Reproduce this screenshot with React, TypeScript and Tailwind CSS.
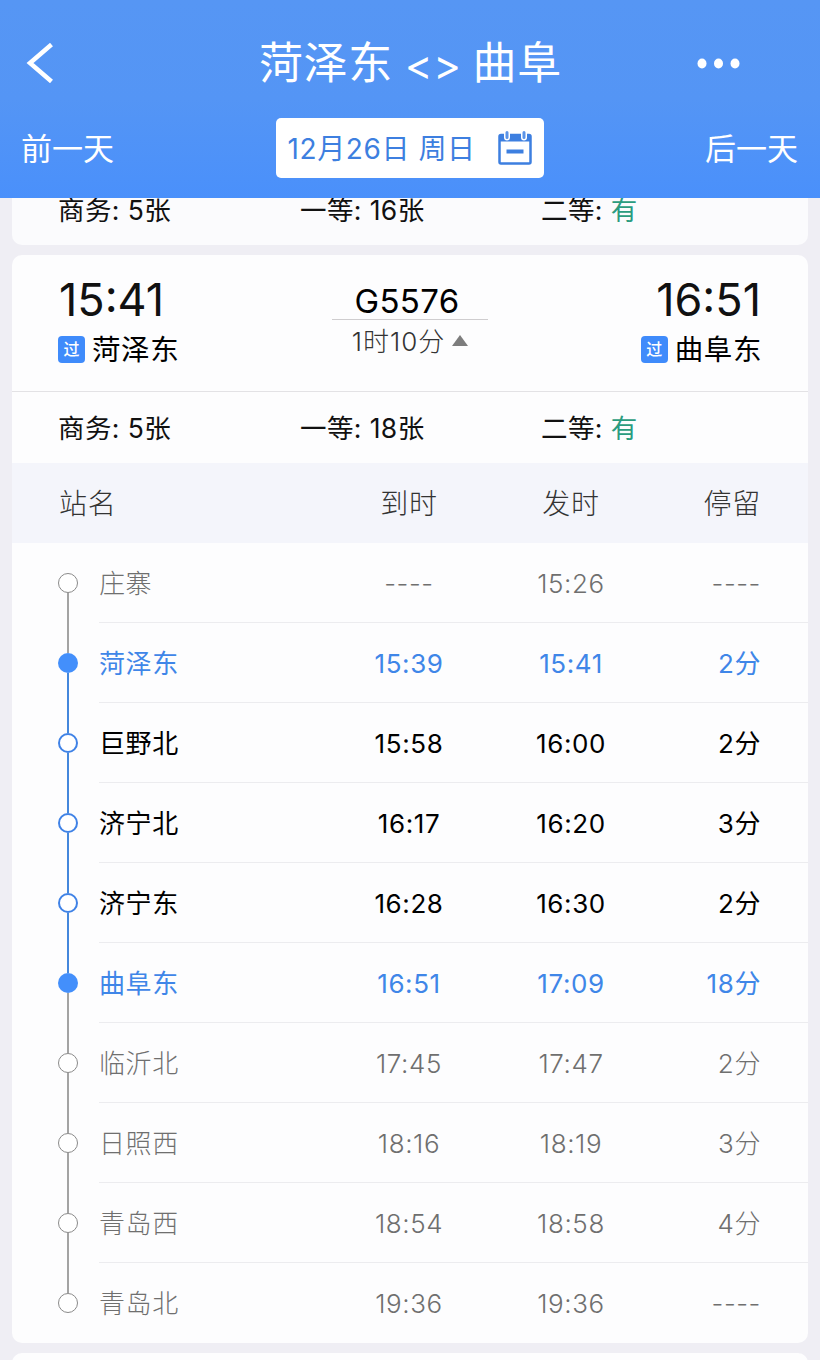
const stops = [
  { name: "庄寨", arrive: "----", depart: "15:26", stay: "----", kind: "off" },
  { name: "菏泽东", arrive: "15:39", depart: "15:41", stay: "2分", kind: "end" },
  { name: "巨野北", arrive: "15:58", depart: "16:00", stay: "2分", kind: "on" },
  { name: "济宁北", arrive: "16:17", depart: "16:20", stay: "3分", kind: "on" },
  { name: "济宁东", arrive: "16:28", depart: "16:30", stay: "2分", kind: "on" },
  { name: "曲阜东", arrive: "16:51", depart: "17:09", stay: "18分", kind: "end" },
  { name: "临沂北", arrive: "17:45", depart: "17:47", stay: "2分", kind: "off" },
  { name: "日照西", arrive: "18:16", depart: "18:19", stay: "3分", kind: "off" },
  { name: "青岛西", arrive: "18:54", depart: "18:58", stay: "4分", kind: "off" },
  { name: "青岛北", arrive: "19:36", depart: "19:36", stay: "----", kind: "off" },
];

const textStyle: any = {
  off: "text-[#6f6f6f] font-light",
  end: "text-[#3f86e8] font-[390]",
  on: "text-black",
};

const dotStyle: any = {
  off: "border-[1.5px] border-[#8a8a8a] bg-white",
  end: "bg-[#438ffb]",
  on: "border-2 border-[#3f82e6] bg-white",
};

// the blue part of the line runs between the two "end" stations
const first = stops.findIndex((s) => s.kind === "end");
const last = stops.length - 1 - [...stops].reverse().findIndex((s) => s.kind === "end");

function Line({ from }: { from: number }) {
  if (from < 0 || from >= stops.length - 1) return <div className="flex-1" />;
  return from >= first && from < last ? (
    <div className="flex-1 w-[2.5px] bg-[#4487dc]" />
  ) : (
    <div className="flex-1 w-[2px] bg-[#a3a3a3]" />
  );
}

function Seats({ first }: { first: string }) {
  return (
    <div className="h-[71px] pl-[46px] pt-0.5 flex items-center text-[26.5px] tracking-[0.4px] font-[390] text-[#111] whitespace-nowrap">
      <span className="w-[242px]">商务: 5张</span>
      <span className="w-[241px]">一等: {first}张</span>
      <span>
        二等: <span className="text-[#2b9c80]">有</span>
      </span>
    </div>
  );
}

function Badge() {
  return (
    <span className="w-[27px] h-[27px] mb-0.5 rounded-[4px] bg-[#3f8bfb] text-white text-[16px] font-medium tracking-normal flex items-center justify-center leading-none">
      过
    </span>
  );
}

export default function App() {
  return (
    <div className="w-[820px] h-[1360px] overflow-hidden bg-[#efeef4] font-['Inter','Noto_Sans_CJK_SC',sans-serif] leading-none">

      {/* Header */}
      <header className="relative z-10 h-[198px] bg-gradient-to-b from-[#5696f4] via-[#5495f5] to-[#4a90fb] text-white">
        <div className="h-[118px] pt-2 pl-[26px] pr-[80px] grid grid-cols-[233px_1fr_43px] items-center">
          <svg width="28" height="40" viewBox="0 0 28 40" fill="none" stroke="white" strokeWidth="4.500">
            <path d="M25.500 1.500L4 20L25.500 38.500" />
          </svg>
          <h1 className="text-[44px] tracking-[0.6px] font-[390] whitespace-nowrap flex items-center">
            <span>菏泽东</span>
            <span className="ml-[12px] mr-[11px] pt-[3px] text-[42px]">&lt;&gt;</span>
            <span>曲阜</span>
          </h1>
          <svg width="43" height="11" viewBox="0 0 43 11" fill="white">
            <ellipse cx="5" cy="5.500" rx="4.500" ry="5" />
            <ellipse cx="21.500" cy="5.500" rx="4.500" ry="5" />
            <ellipse cx="38" cy="5.500" rx="4.500" ry="5" />
          </svg>
        </div>
        <div className="h-[60px] px-[21px] flex items-center justify-between text-[31px] font-[390]">
          <span>前一天</span>
          <button className="w-[268px] h-[60px] pl-3 pr-3 rounded-[5px] bg-white text-[#3d7fe0] text-[28px] font-normal flex items-center justify-between whitespace-nowrap">
            <span className="pt-0.5 tracking-[0.6px]">12月26日 周日</span>
            <svg width="34" height="34" viewBox="0 0 34 34" fill="none">
              <rect x="1.500" y="4" width="31" height="28.500" rx="1.500" stroke="#3d7fe0" strokeWidth="2.500" />
              <path d="M1.500 4H32.500V10.500H1.500Z" fill="#3d7fe0" />
              <path d="M9 0V6.500M26 0V6.500" stroke="white" strokeWidth="6" strokeLinecap="round" />
              <path d="M9 1.500V6.500M26 1.500V6.500" stroke="#5b94e8" strokeWidth="3" strokeLinecap="round" />
              <path d="M8.500 20.500H25.500" stroke="#3d7fe0" strokeWidth="4" />
            </svg>
          </button>
          <span className="pr-px">后一天</span>
        </div>
      </header>

      {/* Train list */}
      <main className="-mt-6 px-3 flex flex-col gap-2.5">
        <section className="bg-[#fbfbfd] rounded-[10px]">
          <Seats first="16" />
        </section>

        <section className="bg-[#fdfdfe] rounded-[10px] overflow-hidden">
          <div className="h-[137px] pt-[22px] px-[46px] flex justify-between border-b border-[#e3e2e5]">
            <div>
              <div className="text-[45px] h-[46px] pl-px text-[#111]">15:41</div>
              <div className="mt-1 h-[46px] flex items-center gap-[7px] text-[28.5px] tracking-[0.6px]">
                <Badge />
                菏泽东
              </div>
            </div>
            <div className="w-[156px] flex flex-col items-center">
              <div className="h-[43px] pt-2 pr-[6px] w-full text-center text-[33px] tracking-[0.3px] border-b border-[#cfcdcf]">G5576</div>
              <div className="h-[44px] flex items-center gap-[7px] text-[26px] tracking-[1px] font-light text-[#333]">
                1时10分
                <svg className="mb-1" width="16" height="11" viewBox="0 0 16 11" fill="#7d7d7d">
                  <path d="M8 0L16 11H0Z" />
                </svg>
              </div>
            </div>
            <div className="flex flex-col items-end">
              <div className="text-[45px] h-[46px] pr-px text-[#111]">16:51</div>
              <div className="mt-1 h-[46px] flex items-center gap-[7px] text-[28.5px] tracking-[0.6px]">
                <Badge />
                曲阜东
              </div>
            </div>
          </div>

          <Seats first="18" />

          <div className="h-20 pl-[47px] pr-[47px] pt-0.5 grid grid-cols-[269px_162px_162px_1fr] items-center text-center text-[28px] tracking-[0.7px] font-light text-[#333] bg-[#f4f5fb]">
            <span className="text-left">站名</span>
            <span>到时</span>
            <span>发时</span>
            <span className="text-right">停留</span>
          </div>

          {stops.map((s, i) => (
            <div key={s.name} className={`h-20 pl-[46px] flex text-[26px] tracking-[0.6px] ${textStyle[s.kind]}`}>
              <div className="w-5 flex flex-col items-center">
                <Line from={i - 1} />
                <div className={`w-5 h-5 rounded-full ${dotStyle[s.kind]}`} />
                <Line from={i} />
              </div>
              <div
                className={`ml-[21px] pr-[47px] pt-0.5 flex-1 grid grid-cols-[229px_162px_162px_1fr] items-center text-center ${
                  i < stops.length - 1 ? "border-b border-[#ececef]" : ""
                }`}
              >
                <span className="text-left">{s.name}</span>
                <span>{s.arrive}</span>
                <span>{s.depart}</span>
                <span className="text-right">{s.stay}</span>
              </div>
            </div>
          ))}
        </section>

        <section className="h-20 bg-[#fdfdfe] rounded-[10px]" />
      </main>
    </div>
  );
}
